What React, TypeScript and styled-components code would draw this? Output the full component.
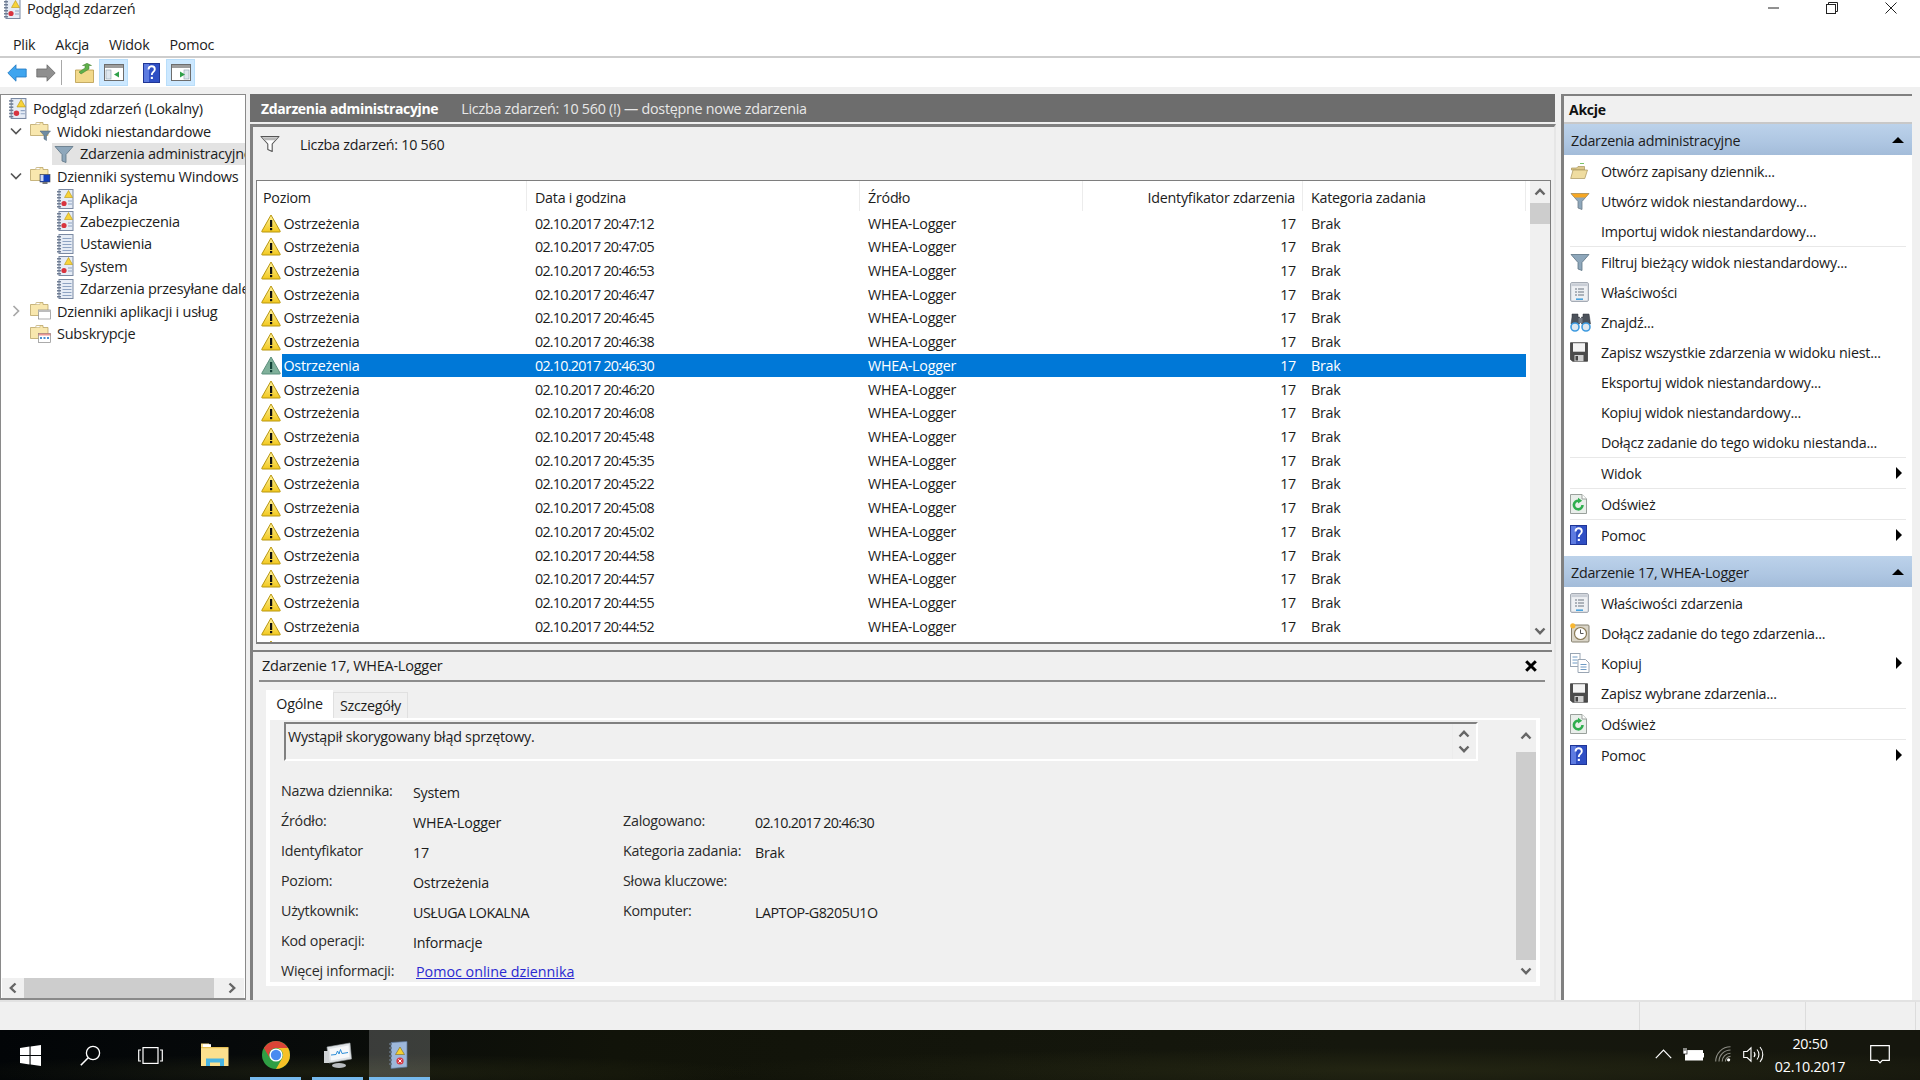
import React from "react";
import styled, { createGlobalStyle } from "styled-components";

const Global = createGlobalStyle`
  html, body { margin: 0; padding: 0; background: #f0f0f0; }
  * { box-sizing: border-box; }
  body { font-family: "Open Sans", "Noto Sans", "Liberation Sans", sans-serif; font-size: 14px; color: #1c1c1c; letter-spacing: -0.25px; }
`;

const Page = styled.div`width:1920px;height:1080px;overflow:hidden;display:flex;flex-direction:column;background:#f0f0f0;`;

const TitleBar = styled.div`height:33px;background:#fff;display:flex;align-items:flex-start;padding-left:3px;`;
const TitleIcon = styled.span`display:block;height:19px;width:18px;margin-right:6px;margin-top:-1px;`;
const TitleText = styled.span`line-height:18px;font-size:14.5px;color:#222;`;
const WinControls = styled.div`margin-left:auto;display:flex;`;
const WinBtn = styled.span`width:58.5px;height:15px;display:flex;align-items:center;justify-content:center;`;

const MenuBar = styled.div`height:25px;background:#fff;border-bottom:2px solid #cdcdcd;display:flex;gap:20px;padding:0 0 1px 13px;align-items:center;font-size:14.3px;`;

const Toolbar = styled.div`height:29px;background:#fff;display:flex;align-items:flex-start;padding:1px 0 0 2px;`;
const ToolBtn = styled.span<{ $on?: boolean; $gap?: number }>`
  width:29px;height:27px;display:flex;align-items:center;justify-content:center;margin-left:${p => p.$gap || 0}px;
  background:${p => (p.$on ? "#cce8ff" : "transparent")};
  border:1px solid ${p => (p.$on ? "#b9defa" : "transparent")};
`;
const ToolSep = styled.span`width:1px;height:25px;margin:1px 8px 0 1px;background:#a8a8a8;`;

const Main = styled.div`height:913px;padding-top:7px;display:flex;background:#f0f0f0;`;

const LeftPane = styled.div`width:246px;background:#fff;border:1px solid #8a8a8a;border-bottom-width:2px;display:flex;flex-direction:column;overflow:hidden;`;
const Tree = styled.div`flex:1;padding-top:2.5px;overflow:hidden;`;
const TreeRow = styled.div<{ $pad: number }>`height:22.5px;display:flex;align-items:center;padding-left:${p => p.$pad}px;white-space:nowrap;font-size:14.5px;`;
const TreeChev = styled.span`width:23px;height:16px;margin-left:-1px;padding-right:1px;display:flex;align-items:center;justify-content:center;flex:none;`;
const TreeItem = styled.div<{ $sel?: boolean }>`height:100%;display:flex;align-items:center;flex:1;min-width:0;gap:6px;padding-left:2px;overflow:hidden;background:${p => (p.$sel ? "#e3e3e3" : "transparent")};`;
const TreeIconBox = styled.span`flex:none;display:flex;align-items:center;justify-content:center;`;

const HScroll = styled.div`height:20px;margin:0 1px;display:flex;align-items:stretch;background:#f0f0f0;`;
const ScrollEnd = styled.span<{ $w?: number; $h?: number; $pl?: number }>`display:flex;align-items:center;justify-content:center;flex:none;width:${p => (p.$w ? p.$w + "px" : "auto")};height:${p => (p.$h ? p.$h + "px" : "auto")};padding-left:${p => p.$pl || 0}px;`;
const HThumb = styled.span`width:191px;background:#cdcdcd;`;

const Center = styled.div`width:1306px;margin-left:4px;display:flex;flex-direction:column;`;
const CenterHead = styled.div`height:28px;width:1305px;background:#6d6d6d;color:#f4f4f4;display:flex;align-items:center;padding:1px 0 0 11px;gap:23px;font-size:14.3px;`;
const CenterHeadTitle = styled.b`font-weight:700;color:#fff;font-size:14px;letter-spacing:-0.35px;`;
const CenterHeadInfo = styled.span`color:#e8e8e8;`;
const CenterBody = styled.div`flex:1;margin-top:2px;border-left:3px solid #808080;border-top:3px solid #808080;border-right:2px solid #e6e6e6;display:flex;flex-direction:column;min-height:0;`;

const FilterStrip = styled.div`height:53px;display:flex;align-items:flex-start;gap:20px;padding:8px 0 0 7px;font-size:14.3px;`;
const FilterIconBox = styled.span`display:block;height:18px;`;
const EventTable = styled.div`margin-left:3px;width:1295px;height:464px;border:1px solid #7e7e7e;border-bottom-width:2px;background:#fff;display:flex;overflow:hidden;`;
const TableMain = styled.div`width:1269px;display:flex;flex-direction:column;`;

const HeaderRow = styled.div`height:30.2px;flex:none;display:grid;grid-template-columns:270px 333px 223px 220px 223px;align-items:stretch;font-size:14.3px;`;
const HeaderCell = styled.div<{ $right?: boolean; $first?: boolean }>`display:flex;align-items:center;padding:2px 7px 0 ${p => (p.$first ? 6 : 8)}px;justify-content:${p => (p.$right ? "flex-end" : "flex-start")};border-right:1px solid #ececec;`;
const RowList = styled.div`flex:1;overflow:hidden;`;
const EventRow = styled.div`height:23.72px;display:flex;font-size:14.3px;`;
const WarnCell = styled.span`width:25px;flex:none;display:flex;align-items:center;justify-content:flex-end;padding-right:1px;`;
const RowBody = styled.div<{ $sel?: boolean }>`
  flex:1;display:grid;grid-template-columns:245px 333px 223px 220px 223px;align-items:center;
  background:${p => (p.$sel ? "#0078d7" : "transparent")};
  color:${p => (p.$sel ? "#fff" : "#1c1c1c")};
`;
const RowCell = styled.span<{ $right?: boolean; $first?: boolean }>`
  padding:0 7px 0 ${p => (p.$first ? "1.5px" : "8px")};
  text-align:${p => (p.$right ? "right" : "left")};
  white-space:nowrap;
`;
const DateText = styled.span`letter-spacing:-0.75px;`;

const VScroll = styled.div<{ $w: number; $bg?: string }>`width:${p => p.$w}px;flex:none;display:flex;flex-direction:column;background:${p => p.$bg || "#f0f0f0"};`;
const VThumb = styled.span<{ $h: number }>`height:${p => p.$h}px;background:#cdcdcd;flex:none;`;
const VFill = styled.span`flex:1;`;
const TableScrollWrap = styled.div`margin-left:4px;width:20px;display:flex;flex-direction:column;background:#f0f0f0;`;

const DetailPane = styled.div`flex:1;margin-top:6px;margin-right:2px;border-top:2px solid #808080;display:flex;flex-direction:column;min-height:0;`;
const DetailHead = styled.div`height:30px;margin:0 7px 0 6px;border-bottom:2px solid #8c8c8c;display:flex;align-items:center;justify-content:space-between;padding:0 8px 1px 3px;font-size:14.5px;flex:none;`;
const Tabs = styled.div`display:flex;align-items:flex-end;margin:8px 0 0 13px;height:28px;flex:none;`;
const TabActive = styled.div`width:67px;height:29px;margin-bottom:-1px;background:#fff;display:flex;align-items:center;justify-content:center;font-size:14.3px;padding-bottom:3px;position:relative;z-index:1;`;
const TabIdle = styled.div`width:75px;height:26px;border:1px solid #e0e0e0;border-bottom:0;display:flex;align-items:center;justify-content:center;font-size:14.3px;`;
const TabBody = styled.div`margin-left:13px;width:1274px;height:268px;border:solid #fff;border-width:2px 4px 4px 4px;background:#f0f0f0;display:flex;flex:none;`;
const DetailContent = styled.div`flex:1;min-width:0;`;
const DescBox = styled.div`margin:2px 38px 0 14px;height:39px;border:2px solid;border-color:#808080 #fff #fff #808080;display:flex;justify-content:space-between;padding:3px 2px 0 2px;font-size:14.3px;line-height:19px;`;
const DescScroll = styled.span`width:22px;margin-top:-3px;display:flex;flex-direction:column;align-items:center;justify-content:center;gap:3px;border-left:1px solid #ececec;`;
const FieldGrid = styled.div`margin:15px 0 0 11px;display:grid;grid-template-columns:132px 210px 132px 1fr;grid-auto-rows:30px;align-items:center;font-size:14px;`;
const FieldLabel = styled.span`color:#2a2a2a;font-size:14.3px;padding-bottom:1px;`;
const FieldValue = styled.span<{ $tight?: boolean }>`padding-top:3px;color:#1c1c1c;font-size:14.3px;letter-spacing:${p => (p.$tight ? "-0.5px" : "inherit")};`;
const FieldLink = styled.a`margin-left:3px;color:#2a2ad0;text-decoration:underline;font-size:14.3px;letter-spacing:0;`;
const Fill = styled.span``;

const RightPane = styled.div`width:351px;margin-left:5px;background:#fff;border-left:3px solid #808080;border-top:2px solid #808080;display:flex;flex-direction:column;`;
const ActionsHead = styled.div`height:28px;background:#f0f0f0;display:flex;align-items:center;padding:1px 0 0 5px;font-weight:700;font-size:14px;color:#111;border-bottom:2px solid #c8c8c8;flex:none;`;
const Section = styled.div<{ $top?: number }>`height:31px;flex:none;margin-top:${p => p.$top || 0}px;display:flex;align-items:center;justify-content:space-between;padding:1px 8px 0 7px;font-size:14.3px;background:linear-gradient(180deg,#bcd2ea 0%,#aec6e2 60%,#a3bcd9 100%);`;
const ActionList = styled.div`padding-top:1px;display:flex;flex-direction:column;`;
const ActionRow = styled.div`height:30px;flex:none;display:flex;align-items:center;font-size:14.3px;padding-right:10px;`;
const ActionIconBox = styled.span`width:37px;flex:none;padding-left:6px;display:flex;align-items:center;`;
const ActionLabel = styled.span`flex:1;white-space:nowrap;`;
const ActionSep = styled.div`height:1px;margin:0 6px;background:#e8e8e8;flex:none;`;
const Tri = styled.span<{ $dir: "up" | "right" }>`
  width:0;height:0;display:block;
  ${p => p.$dir === "up"
    ? "border-left:6.5px solid transparent;border-right:6.5px solid transparent;border-bottom:6.5px solid #000;"
    : "border-top:6px solid transparent;border-bottom:6px solid transparent;border-left:6.5px solid #000;"}
`;

const StatusBar = styled.div`height:30px;flex:none;background:#f0f0f0;border-top:2px solid #e2e2e2;display:flex;`;
const StatusCell = styled.div<{ $w: number }>`width:${p => p.$w}px;flex:none;border-right:1px solid #dcdcdc;`;

const Taskbar = styled.div`
  height:50px;flex:none;display:flex;color:#fff;
  background:
    radial-gradient(ellipse 420px 18px at 340px 42px, rgba(70,72,30,.28), transparent),
    radial-gradient(ellipse 700px 22px at 1400px 40px, rgba(60,62,28,.35), transparent),
    linear-gradient(90deg,#020507 0%,#06090a 12%,#111309 32%,#15170d 70%,#15160d 100%);
`;
const TaskBtn = styled.span<{ $w: number; $run?: boolean; $active?: boolean; $ml?: number; $pr?: number }>`
  width:${p => p.$w}px;flex:none;margin-left:${p => p.$ml || 0}px;padding-right:${p => p.$pr || 0}px;position:relative;display:flex;align-items:center;justify-content:center;
  background:${p => (p.$active ? "rgba(255,255,255,.2)" : "transparent")};
  ${p => p.$run ? `&::after{content:"";position:absolute;bottom:0;height:3px;left:${p.$active ? 0 : 5}px;right:${p.$active ? 0 : 5}px;background:#76b9ed;}` : ""}
`;
const TrayArea = styled.div`margin-left:auto;display:flex;padding-right:12px;`;
const TrayIcon = styled.span`width:30px;display:flex;align-items:center;justify-content:center;padding-bottom:2px;`;
const Clock = styled.div`width:84px;display:flex;flex-direction:column;align-items:center;justify-content:center;font-size:14.3px;line-height:23px;`;
const NotifBtn = styled.span`width:56px;display:flex;align-items:center;justify-content:center;padding-bottom:2px;`;

/* ---------- drawings ---------- */
const Warn = ({ dim }: { dim?: boolean }) => (
  <svg width="20" height="19" viewBox="0 0 20 19">
    <defs>
      <linearGradient id="wg" x1="0" y1="0" x2="0" y2="1"><stop offset="0" stopColor="#fff3a0" /><stop offset="1" stopColor="#f2c81e" /></linearGradient>
    </defs>
    <path d="M10 1 L19.2 17.2 Q19.5 18 18.6 18 L1.4 18 Q.5 18 .8 17.2 Z" fill={dim ? "#7fb09a" : "url(#wg)"} stroke={dim ? "#5b8f7c" : "#b8960f"} strokeWidth="1" strokeLinejoin="round" />
    <rect x="9" y="6" width="2.2" height="7" fill={dim ? "#14453a" : "#111"} />
    <rect x="9" y="14" width="2.2" height="2.2" fill={dim ? "#14453a" : "#111"} />
  </svg>
);

const Book = ({ alert, size = 18 }: { alert?: boolean; size?: number }) => (
  <svg width={size} height={size + 2} viewBox="0 0 18 20">
    <rect x="3" y=".5" width="14" height="19" fill="#e6ecf5" stroke="#7b8aa3" />
    <g fill="#6f7d94">{[2, 5, 8, 11, 14, 17].map(y => <rect key={y} x="1" y={y} width="4" height="1.5" />)}</g>
    {alert ? (
      <>
        <path d="M12.5 1.5 L16.5 8.5 L8.5 8.5 Z" fill="#f8d33a" stroke="#b8960f" strokeWidth=".6" />
        <circle cx="8" cy="14.5" r="2.6" fill="#d8343f" />
        <path d="M12 12h4M12 15h4" stroke="#8ea3c2" />
      </>
    ) : (
      <path d="M6.5 4.5h9M6.5 7.5h9M6.5 10.5h9M6.5 13.5h9M6.5 16.5h9" stroke="#8ea3c2" />
    )}
  </svg>
);

const Folder = ({ kind }: { kind: "filter" | "pc" | "app" | "sub" }) => (
  <svg width="21" height="20" viewBox="0 0 21 20">
    <path d="M.5 3.5 h5 l1.5 -2 h6 v2 h5 v11 h-17.5 Z" fill="#f8e7ae" stroke="#bba566" strokeWidth=".8" />
    <path d="M6 1.5h4v2H6z" fill="#fff" stroke="#bba566" strokeWidth=".5" />
    {kind === "filter" && <path d="M10 10h10.5l-4 4.5v5l-2.5-1.5v-3.5Z" fill="#6f8ca3" stroke="#4e6274" strokeWidth=".5" />}
    {kind === "pc" && (
      <>
        <rect x="10" y="8.5" width="10" height="7.5" fill="#123fbf" stroke="#444" strokeWidth=".6" />
        <rect x="12.5" y="16" width="5" height="2" fill="#777" />
        <rect x="10.5" y="9" width="3" height="6" fill="#fff" opacity=".8" />
      </>
    )}
    {kind === "app" && (
      <>
        <rect x="8.5" y="9" width="12" height="9" fill="#fff" stroke="#888" strokeWidth=".7" />
        <rect x="8.5" y="9" width="12" height="2" fill="#bcbcbc" />
      </>
    )}
    {kind === "sub" && (
      <>
        <rect x="8.5" y="9.5" width="12" height="9" fill="#fff" stroke="#888" strokeWidth=".7" />
        <path d="M10 13h2v2h-2zM13.5 13h2v2h-2zM17 13h2v2h-2z" fill="#4a8fd0" />
        <rect x="8.5" y="9.5" width="12" height="2" fill="#d9534f" opacity=".6" />
      </>
    )}
  </svg>
);

const Funnel = ({ w = 20, fill = "#8ea7bb", stroke = "#5d7384", top }: { w?: number; fill?: string; stroke?: string; top?: string }) => (
  <svg width={w} height={w} viewBox="0 0 20 20">
    <path d="M1 2.5h18l-7 8v8l-4-1.5v-6.5Z" fill={fill} stroke={stroke} strokeWidth=".8" strokeLinejoin="round" />
    {top && <path d="M1 2.5h18l-3.5 4h-11Z" fill={top} />}
  </svg>
);

const FunnelOutline = () => (
  <svg width="20" height="18" viewBox="0 0 20 18">
    <path d="M1 1.5h18l-6.8 7.5v7.5l-4.4-2v-5.5Z" fill="#fff" stroke="#555" strokeWidth="1.1" strokeLinejoin="round" />
    <path d="M2.5 2.2h15l-2.5 3h-10Z" fill="#b8b8b8" />
  </svg>
);

const Chev = ({ dir, size = 12, color = "#666" }: { dir: "up" | "down" | "left" | "right"; size?: number; color?: string }) => {
  const r = { up: 0, right: 90, down: 180, left: 270 }[dir];
  return (
    <svg width={size} height={size} viewBox="0 0 12 12" style={{ transform: `rotate(${r}deg)` }}>
      <path d="M1.5 8.5 L6 3.8 L10.5 8.5" fill="none" stroke={color} strokeWidth="2.4" />
    </svg>
  );
};

const TreeArrow = ({ open }: { open?: boolean }) => (
  <svg width="12" height="12" viewBox="0 0 12 12">
    {open
      ? <path d="M1 3.5 L6 8.5 L11 3.5" fill="none" stroke="#555" strokeWidth="1.7" />
      : <path d="M3.5 1 L8.5 6 L3.5 11" fill="none" stroke="#a8a8a8" strokeWidth="1.7" />}
  </svg>
);

const BackArrow = ({ flip, color, dark }: { flip?: boolean; color: string; dark: string }) => (
  <svg width="20" height="18" viewBox="0 0 20 18" style={{ transform: flip ? "scaleX(-1)" : undefined }}>
    <path d="M.8 9 L9 .8 V5 H19.2 V13 H9 V17.2 Z" fill={color} stroke={dark} strokeWidth=".8" strokeLinejoin="round" />
  </svg>
);

const UpFolder = () => (
  <svg width="19" height="20" viewBox="0 0 19 20">
    <path d="M.5 7h18v12.5H.5Z" fill="#f2d98b" stroke="#b79a4b" strokeWidth=".8" />
    <path d="M4 9 L10 5 V2.5 H7.5 L12 .3 L16.5 2.5 H14 V6 L6 11Z" fill="#5fb04a" stroke="#3e7d2d" strokeWidth=".5" />
  </svg>
);

const PanelIcon = ({ right }: { right?: boolean }) => (
  <svg width="20" height="17" viewBox="0 0 20 17">
    <rect x=".5" y=".5" width="19" height="16" fill="#fff" stroke="#6d6d6d" />
    <rect x="1" y="1" width="18" height="3" fill="#9d9d9d" />
    <rect x="2" y="6" width="5" height="9" fill="#dfe7ee" stroke="#8da0ad" strokeWidth=".6" transform={right ? "translate(11 0)" : undefined} />
    <path d={right ? "M9 7.5 L14 10.5 L9 13.5Z" : "M15 7.5 L10 10.5 L15 13.5Z"} fill="#2fa04a" />
  </svg>
);

const Help = ({ w = 17, h = 20 }: { w?: number; h?: number }) => (
  <svg width={w} height={h} viewBox="0 0 17 20">
    <rect x=".5" y=".5" width="16" height="19" fill="#2f4fc4" stroke="#1f3596" />
    <rect x="1" y="1" width="5" height="18" fill="#5d7be0" />
    <path d="M5.5 6.5 Q5.8 3.3 8.7 3.3 Q11.8 3.3 11.8 6.2 Q11.8 8 10 9.2 Q8.8 10 8.8 12" fill="none" stroke="#fff" strokeWidth="1.9" />
    <rect x="7.8" y="13.8" width="2.1" height="2.2" fill="#fff" />
  </svg>
);

const OpenFolder = () => (
  <svg width="18" height="18" viewBox="0 0 18 18">
    <path d="M10 1.5h4" stroke="#7ac36a" strokeWidth="1" />
    <path d="M1.5 6h5l1.5-1.5h6.5V8H1.5Z" fill="#dcc88b" stroke="#a8945a" strokeWidth=".7" />
    <path d="M.7 16.5 L3 8h14.5l-2.7 8.5Z" fill="#efdca0" stroke="#a8945a" strokeWidth=".7" />
  </svg>
);

const Props = () => (
  <svg width="19" height="20" viewBox="0 0 19 20">
    <rect x=".7" y=".7" width="17.6" height="18.6" rx="1" fill="#eef0f3" stroke="#9098a3" />
    <rect x="1.5" y="1.5" width="16" height="2.6" fill="#c9ced6" />
    <path d="M5 7h2M5 10h2M5 13h2M8 7h6M8 10h6M8 13h6" stroke="#6b7480" />
    <rect x="6" y="16.4" width="7" height="1.6" fill="#4ba3dd" />
  </svg>
);

const Binoc = () => (
  <svg width="21" height="20" viewBox="0 0 21 20">
    <path d="M2 2h6v3h1.5v7h-8.5l1-7Zm11 0h6l.5 3 1 7H11.5V5H13Z" fill="#4c525b" stroke="#2f333a" strokeWidth=".5" />
    <rect x="8.5" y="6" width="4" height="5" fill="#777d87" />
    <circle cx="5" cy="15" r="4" fill="#dfe8f0" stroke="#3e9be0" strokeWidth="1.6" />
    <circle cx="16" cy="15" r="4" fill="#dfe8f0" stroke="#3e9be0" strokeWidth="1.6" />
  </svg>
);

const Floppy = () => (
  <svg width="18" height="20" viewBox="0 0 18 20">
    <path d="M.5 .7h17v18.6H2.5l-2-2Z" fill="#4b4b4b" stroke="#303030" strokeWidth=".7" />
    <rect x="3" y="1.2" width="12" height="8.5" fill="#f4f4f4" />
    <rect x="4.5" y="13" width="9" height="6.2" fill="#cfcfcf" />
    <rect x="5.5" y="14" width="2.5" height="4.5" fill="#444" />
  </svg>
);

const Refresh = () => (
  <svg width="17" height="20" viewBox="0 0 17 20">
    <path d="M.5.5h11.5l4.5 4.5v14.5H.5Z" fill="#e9eeea" stroke="#9aa19c" />
    <path d="M12 .5v4.5h4.5" fill="#fff" stroke="#9aa19c" />
    <path d="M12.5 11 A4.3 4.3 0 1 1 9 6.8" fill="none" stroke="#2fae4e" strokeWidth="2.6" />
    <path d="M8 3.8 L12.2 6.8 L8 9.6 Z" fill="#2fae4e" />
  </svg>
);

const TaskClock = () => (
  <svg width="20" height="20" viewBox="0 0 20 20">
    <rect x="1.5" y="2" width="17.5" height="17" rx="1" fill="#d9d4c7" stroke="#85806f" />
    <circle cx="10.5" cy="10.5" r="6" fill="#fff" stroke="#8a7a55" strokeWidth="1.2" />
    <path d="M10.5 6.5v4h3" fill="none" stroke="#555" strokeWidth="1" />
    <circle cx="2.8" cy="2.8" r="2.6" fill="#f7b733" />
  </svg>
);

const CopyIcon = () => (
  <svg width="20" height="20" viewBox="0 0 20 20">
    <rect x=".5" y=".5" width="9.5" height="13" fill="#fff" stroke="#9aa6b4" />
    <path d="M2.5 4h5M2.5 7h5M2.5 10h5" stroke="#6e9ac4" />
    <path d="M8 6.5h7.5l3.5 3.5v9.5H8Z" fill="#fff" stroke="#9aa6b4" />
    <path d="M10.5 11.5h6M10.5 14h6M10.5 16.5h6" stroke="#6e9ac4" />
  </svg>
);

const WinLogo = () => (
  <svg width="21" height="21" viewBox="0 0 21 21" fill="#fff">
    <path d="M0 3 L9.5 1.6 V10 H0Z M10.6 1.4 L21 0 V10 H10.6Z M0 11 H9.5 V19.4 L0 18Z M10.6 11 H21 V21 L10.6 19.6Z" />
  </svg>
);
const SearchGlyph = () => (
  <svg width="21" height="21" viewBox="0 0 21 21" fill="none" stroke="#fff" strokeWidth="1.3">
    <circle cx="13" cy="8" r="6.6" />
    <path d="M8.2 12.8 L.8 20.2" strokeWidth="1.6" />
  </svg>
);
const TaskView = () => (
  <svg width="25" height="17" viewBox="0 0 25 17" fill="none" stroke="#fff" strokeWidth="1.2">
    <rect x="5" y=".6" width="15" height="15.8" />
    <path d="M3 3H.7v11H3M22 3h2.3v11H22" />
  </svg>
);
const Explorer = () => (
  <svg width="28" height="24" viewBox="0 0 28 24">
    <path d="M0 3 V23 H27.5 V5 H10 L8 .5 H0Z" fill="#fbe08e" />
    <rect x="2" y="1.2" width="8" height="2.8" fill="#fff" />
    <rect x="0" y="4" width="27.5" height="1.2" fill="#e6bf55" />
    <path d="M5 23V15.5H23V23H19V19.5H9V23Z" fill="#48b4e3" />
  </svg>
);
const Chrome = () => (
  <svg width="28" height="28" viewBox="0 0 28 28">
    <circle cx="14" cy="14" r="14" fill="#2f9e44" />
    <path d="M26.12 7A14 14 0 0 0 1.88 7L8 17.5A7 7 0 0 1 14 7Z" fill="#db4437" />
    <path d="M26.12 7H14A7 7 0 0 1 20 17.5L14 28A14 14 0 0 0 26.12 7Z" fill="#f6c026" />
    <circle cx="14" cy="14" r="6.6" fill="#fff" />
    <circle cx="14" cy="14" r="5.2" fill="#4a8bf0" />
  </svg>
);
const PerfMon = () => (
  <svg width="28" height="26" viewBox="0 0 28 26">
    <ellipse cx="15" cy="23.5" rx="7" ry="2.4" fill="#b8bcc0" />
    <path d="M3 5 L26 1 L27.5 17 L5 21Z" fill="#dfe3e6" stroke="#9fa4a8" strokeWidth=".6" />
    <path d="M5.5 7 L24.5 3.5 L25.5 15 L7 18.5Z" fill="#f6f8fa" />
    <path d="M7 13 L12 12.5 L13.5 9 L15 12 L16.5 7.5 L18 11.5 L24 10.5" fill="none" stroke="#2f8fd8" strokeWidth="1" />
    <rect x="0" y="9" width="5" height="12" fill="#cfd3d6" />
  </svg>
);
const EventBook = () => (
  <svg width="20" height="28" viewBox="0 0 20 28">
    <path d="M3 1.5 L19 .5 V26 L3 27.5Z" fill="#9db7da" stroke="#5d7799" strokeWidth=".7" />
    <path d="M1 3h3M1 7h3M1 11h3M1 15h3M1 19h3M1 23h3" stroke="#66717f" strokeWidth="1.4" />
    <path d="M12 6 L16.5 13.5 H7.5Z" fill="#f5cf2f" stroke="#6d5b10" strokeWidth=".5" />
    <circle cx="12" cy="20" r="3.6" fill="#d83a44" />
    <path d="M10.4 18.4 L13.6 21.6 M13.6 18.4 L10.4 21.6" stroke="#fff" strokeWidth="1" />
  </svg>
);
const TrayUp = () => (
  <svg width="17" height="10" viewBox="0 0 17 10" fill="none" stroke="#fff" strokeWidth="1.2"><path d="M.8 9.2 L8.5 1.2 L16.2 9.2" /></svg>
);
const Battery = () => (
  <svg width="21" height="13" viewBox="0 0 21 13" fill="#fff">
    <rect x="2.5" y="2.6" width="17" height="9.4" fill="#fff" stroke="#fff" />
    <rect x="19.5" y="5" width="1.5" height="4.5" />
    <rect x="0" y="2.6" width="4" height="3.4" stroke="#111" strokeWidth=".7" />
    <path d="M1 0v3M3 0v3" stroke="#fff" />
  </svg>
);
const Wifi = () => (
  <svg width="16" height="16" viewBox="0 0 16 16" fill="none" stroke="#8d8d85" strokeWidth="1.1">
    <path d="M.7 15.5 A14.8 14.8 0 0 1 15.5 .7" />
    <path d="M4 15.5 A11.5 11.5 0 0 1 15.5 4" />
    <path d="M7.2 15.5 A8.3 8.3 0 0 1 15.5 7.2" />
    <path d="M10.4 15.5 A5.1 5.1 0 0 1 15.5 10.4" />
    <circle cx="13.6" cy="13.8" r="1.6" fill="#fff" stroke="none" />
  </svg>
);
const Speaker = () => (
  <svg width="21" height="17" viewBox="0 0 21 17" fill="none" stroke="#fff" strokeWidth="1.1">
    <path d="M.7 5.5h3.5L8 1.8v13.4L4.2 11.5H.7Z" />
    <path d="M11 6a4 4 0 0 1 0 5M14 3.5a7.5 7.5 0 0 1 0 10M17 1a11.5 11.5 0 0 1 0 15" />
  </svg>
);
const Notif = () => (
  <svg width="20" height="19" viewBox="0 0 20 19" fill="none" stroke="#fff" strokeWidth="1.2">
    <path d="M.7.7h18.6v14.6h-7l-2.3 2.6-2.3-2.6h-7Z" />
  </svg>
);
const WinMin = () => <svg width="11" height="11" viewBox="0 0 11 11"><path d="M0 6h11" stroke="#222" /></svg>;
const WinRestore = () => (
  <svg width="12" height="12" viewBox="0 0 12 12" fill="none" stroke="#222"><rect x=".5" y="2.5" width="9" height="9" fill="#fff" /><path d="M2.5 2.5v-2h9v9h-2" /></svg>
);
const WinClose = () => <svg width="12" height="12" viewBox="0 0 12 12"><path d="M.5.5l11 11M11.5.5l-11 11" stroke="#222" /></svg>;
const BoldX = () => <svg width="12" height="12" viewBox="0 0 12 12"><path d="M1.2 1.2l9.6 9.6M10.8 1.2l-9.6 9.6" stroke="#000" strokeWidth="3" /></svg>;

/* ---------- data ---------- */
const times = ["20:47:12", "20:47:05", "20:46:53", "20:46:47", "20:46:45", "20:46:38", "20:46:30", "20:46:20", "20:46:08", "20:45:48", "20:45:35", "20:45:22", "20:45:08", "20:45:02", "20:44:58", "20:44:57", "20:44:55", "20:44:52"];

const tree: { pad: number; chev?: "open" | "closed" | "none"; icon: React.ReactNode; label: string; sel?: boolean }[] = [
  { pad: 5, icon: <Book alert size={19} />, label: "Podgląd zdarzeń (Lokalny)" },
  { pad: 5, chev: "open", icon: <Folder kind="filter" />, label: "Widoki niestandardowe" },
  { pad: 51, icon: <Funnel w={20} />, label: "Zdarzenia administracyjne", sel: true },
  { pad: 5, chev: "open", icon: <Folder kind="pc" />, label: "Dzienniki systemu Windows" },
  { pad: 53, icon: <Book alert />, label: "Aplikacja" },
  { pad: 53, icon: <Book alert />, label: "Zabezpieczenia" },
  { pad: 53, icon: <Book />, label: "Ustawienia" },
  { pad: 53, icon: <Book alert />, label: "System" },
  { pad: 53, icon: <Book />, label: "Zdarzenia przesyłane dalej" },
  { pad: 5, chev: "closed", icon: <Folder kind="app" />, label: "Dzienniki aplikacji i usług" },
  { pad: 5, chev: "none", icon: <Folder kind="sub" />, label: "Subskrypcje" },
];

type Act = { icon?: React.ReactNode; label: string; arrow?: boolean; sep?: boolean };
const actionsA: Act[] = [
  { icon: <OpenFolder />, label: "Otwórz zapisany dziennik..." },
  { icon: <Funnel fill="#8ea7bb" stroke="#6d7c88" top="#f5a623" />, label: "Utwórz widok niestandardowy..." },
  { label: "Importuj widok niestandardowy...", sep: true },
  { icon: <Funnel />, label: "Filtruj bieżący widok niestandardowy..." },
  { icon: <Props />, label: "Właściwości" },
  { icon: <Binoc />, label: "Znajdź..." },
  { icon: <Floppy />, label: "Zapisz wszystkie zdarzenia w widoku niest..." },
  { label: "Eksportuj widok niestandardowy..." },
  { label: "Kopiuj widok niestandardowy..." },
  { label: "Dołącz zadanie do tego widoku niestanda...", sep: true },
  { label: "Widok", arrow: true, sep: true },
  { icon: <Refresh />, label: "Odśwież", sep: true },
  { icon: <Help />, label: "Pomoc", arrow: true },
];
const actionsB: Act[] = [
  { icon: <Props />, label: "Właściwości zdarzenia" },
  { icon: <TaskClock />, label: "Dołącz zadanie do tego zdarzenia..." },
  { icon: <CopyIcon />, label: "Kopiuj", arrow: true },
  { icon: <Floppy />, label: "Zapisz wybrane zdarzenia...", sep: true },
  { icon: <Refresh />, label: "Odśwież", sep: true },
  { icon: <Help />, label: "Pomoc", arrow: true },
];

const ActionGroup = ({ items }: { items: Act[] }) => (
  <ActionList>
    {items.map(a => (
      <React.Fragment key={a.label}>
        <ActionRow>
          <ActionIconBox>{a.icon}</ActionIconBox>
          <ActionLabel>{a.label}</ActionLabel>
          {a.arrow && <Tri $dir="right" />}
        </ActionRow>
        {a.sep && <ActionSep />}
      </React.Fragment>
    ))}
  </ActionList>
);

export default function App() {
  return (
    <Page>
      <Global />
      <TitleBar>
        <TitleIcon><Book alert size={18} /></TitleIcon>
        <TitleText>Podgląd zdarzeń</TitleText>
        <WinControls>
          <WinBtn><WinMin /></WinBtn>
          <WinBtn><WinRestore /></WinBtn>
          <WinBtn><WinClose /></WinBtn>
        </WinControls>
      </TitleBar>
      <MenuBar>
        <span>Plik</span><span>Akcja</span><span>Widok</span><span>Pomoc</span>
      </MenuBar>
      <Toolbar>
        <ToolBtn><BackArrow color="#3fa5ef" dark="#2277c0" /></ToolBtn>
        <ToolBtn><BackArrow flip color="#8f8f8f" dark="#6b6b6b" /></ToolBtn>
        <ToolSep />
        <ToolBtn><UpFolder /></ToolBtn>
        <ToolBtn $on><PanelIcon /></ToolBtn>
        <ToolBtn $gap={9}><Help /></ToolBtn>
        <ToolBtn $on><PanelIcon right /></ToolBtn>
      </Toolbar>

      <Main>
        <LeftPane>
          <Tree>
            {tree.map(t => (
              <TreeRow key={t.label} $pad={t.pad}>
                {t.chev && (
                  <TreeChev>
                    {t.chev === "open" && <TreeArrow open />}
                    {t.chev === "closed" && <TreeArrow />}
                  </TreeChev>
                )}
                <TreeItem $sel={t.sel}>
                  <TreeIconBox>{t.icon}</TreeIconBox>
                  <span>{t.label}</span>
                </TreeItem>
              </TreeRow>
            ))}
          </Tree>
          <HScroll>
            <ScrollEnd $w={22}><Chev dir="left" /></ScrollEnd>
            <HThumb />
            <ScrollEnd $w={30} $pl={6}><Chev dir="right" /></ScrollEnd>
          </HScroll>
        </LeftPane>

        <Center>
          <CenterHead>
            <CenterHeadTitle>Zdarzenia administracyjne</CenterHeadTitle>
            <CenterHeadInfo>Liczba zdarzeń: 10 560 (!) — dostępne nowe zdarzenia</CenterHeadInfo>
          </CenterHead>
          <CenterBody>
            <FilterStrip>
              <FilterIconBox><FunnelOutline /></FilterIconBox>
              <span>Liczba zdarzeń: 10 560</span>
            </FilterStrip>
            <EventTable>
              <TableMain>
                <HeaderRow>
                  <HeaderCell $first>Poziom</HeaderCell>
                  <HeaderCell>Data i godzina</HeaderCell>
                  <HeaderCell>Źródło</HeaderCell>
                  <HeaderCell $right>Identyfikator zdarzenia</HeaderCell>
                  <HeaderCell>Kategoria zadania</HeaderCell>
                </HeaderRow>
                <RowList>
                  {times.map(t => {
                    const sel = t === "20:46:30";
                    return (
                      <EventRow key={t}>
                        <WarnCell><Warn dim={sel} /></WarnCell>
                        <RowBody $sel={sel}>
                          <RowCell $first>Ostrzeżenia</RowCell>
                          <RowCell><DateText>02.10.2017 {t}</DateText></RowCell>
                          <RowCell>WHEA-Logger</RowCell>
                          <RowCell $right>17</RowCell>
                          <RowCell>Brak</RowCell>
                        </RowBody>
                      </EventRow>
                    );
                  })}
                  <EventRow><WarnCell><Warn /></WarnCell></EventRow>
                </RowList>
              </TableMain>
              <TableScrollWrap>
                <ScrollEnd $h={22}><Chev dir="up" /></ScrollEnd>
                <VThumb $h={21} />
                <VFill />
                <ScrollEnd $h={22}><Chev dir="down" /></ScrollEnd>
              </TableScrollWrap>
            </EventTable>

            <DetailPane>
              <DetailHead>
                <span>Zdarzenie 17, WHEA-Logger</span>
                <BoldX />
              </DetailHead>
              <Tabs>
                <TabActive>Ogólne</TabActive>
                <TabIdle>Szczegóły</TabIdle>
              </Tabs>
              <TabBody>
                <DetailContent>
                  <DescBox>
                    <span>Wystąpił skorygowany błąd sprzętowy.</span>
                    <DescScroll><Chev dir="up" /><Chev dir="down" /></DescScroll>
                  </DescBox>
                  <FieldGrid>
                    <FieldLabel>Nazwa dziennika:</FieldLabel><FieldValue>System</FieldValue><Fill /><Fill />
                    <FieldLabel>Źródło:</FieldLabel><FieldValue>WHEA-Logger</FieldValue><FieldLabel>Zalogowano:</FieldLabel><FieldValue><DateText>02.10.2017 20:46:30</DateText></FieldValue>
                    <FieldLabel>Identyfikator</FieldLabel><FieldValue>17</FieldValue><FieldLabel>Kategoria zadania:</FieldLabel><FieldValue>Brak</FieldValue>
                    <FieldLabel>Poziom:</FieldLabel><FieldValue>Ostrzeżenia</FieldValue><FieldLabel>Słowa kluczowe:</FieldLabel><Fill />
                    <FieldLabel>Użytkownik:</FieldLabel><FieldValue $tight>USŁUGA LOKALNA</FieldValue><FieldLabel>Komputer:</FieldLabel><FieldValue $tight>LAPTOP-G8205U1O</FieldValue>
                    <FieldLabel>Kod operacji:</FieldLabel><FieldValue>Informacje</FieldValue><Fill /><Fill />
                    <FieldLabel>Więcej informacji:</FieldLabel><FieldLink>Pomoc online dziennika</FieldLink><Fill /><Fill />
                  </FieldGrid>
                </DetailContent>
                <VScroll $w={20}>
                  <ScrollEnd $h={32}><Chev dir="up" /></ScrollEnd>
                  <VThumb $h={208} />
                  <VFill />
                  <ScrollEnd $h={22}><Chev dir="down" /></ScrollEnd>
                </VScroll>
              </TabBody>
            </DetailPane>
          </CenterBody>
        </Center>

        <RightPane>
          <ActionsHead>Akcje</ActionsHead>
          <Section><span>Zdarzenia administracyjne</span><Tri $dir="up" /></Section>
          <ActionGroup items={actionsA} />
          <Section $top={6}><span>Zdarzenie 17, WHEA-Logger</span><Tri $dir="up" /></Section>
          <ActionGroup items={actionsB} />
        </RightPane>
      </Main>

      <StatusBar>
        <StatusCell $w={1640} />
        <StatusCell $w={166} />
        <StatusCell $w={110} />
      </StatusBar>

      <Taskbar>
        <TaskBtn $w={60}><WinLogo /></TaskBtn>
        <TaskBtn $w={60}><SearchGlyph /></TaskBtn>
        <TaskBtn $w={60}><TaskView /></TaskBtn>
        <TaskBtn $w={61} $ml={4}><Explorer /></TaskBtn>
        <TaskBtn $w={61} $run><Chrome /></TaskBtn>
        <TaskBtn $w={61} $ml={1} $run><PerfMon /></TaskBtn>
        <TaskBtn $w={61} $ml={1} $pr={3} $run $active><EventBook /></TaskBtn>
        <TrayArea>
          <TrayIcon><TrayUp /></TrayIcon>
          <TrayIcon><Battery /></TrayIcon>
          <TrayIcon><Wifi /></TrayIcon>
          <TrayIcon><Speaker /></TrayIcon>
          <Clock><span>20:50</span><span>02.10.2017</span></Clock>
          <NotifBtn><Notif /></NotifBtn>
        </TrayArea>
      </Taskbar>
    </Page>
  );
}
